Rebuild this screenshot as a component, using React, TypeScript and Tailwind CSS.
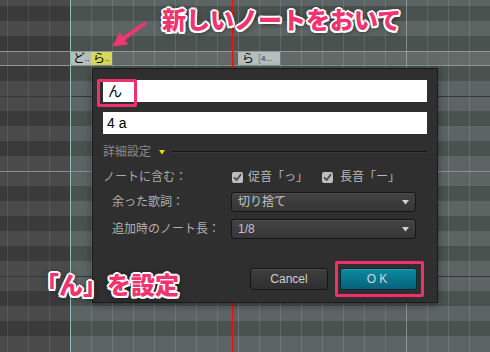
import React from "react";

type Row = { k: "L" | "D" | "S" | "LD" | "LB"; h?: "6" | "16" };

const rows: Row[] = [
  { k: "L", h: "6" },
  { k: "D" },
  { k: "L" },
  { k: "D" },
  { k: "S" },
  { k: "D" },
  { k: "L" },
  { k: "LD" },
  { k: "D" },
  { k: "L" },
  { k: "D" },
  { k: "L" },
  { k: "LB" },
  { k: "D" },
  { k: "L" },
  { k: "D" },
  { k: "L" },
  { k: "D" },
  { k: "L" },
  { k: "LD" },
  { k: "D" },
  { k: "L" },
  { k: "D" },
  { k: "L", h: "16" },
];

function GridRow({ r }: { r: Row }) {
  const h = r.h === "6" ? "h-[6px]" : r.h === "16" ? "h-[16px]" : "h-[15px]";
  let rowCls = "";
  let left = "bg-[#4a4a4a]";
  let right = "bg-[#5c6563]";
  if (r.k === "D") {
    left = "bg-[#3a3a3a]";
    right = "bg-[#49524f]";
  } else if (r.k === "S") {
    rowCls = "border-y border-[#8e9593]";
    left = "bg-[#4f4f4f]";
    right = "bg-[#636b69]";
  } else if (r.k === "LD") {
    rowCls = "border-t border-[#343837]";
  } else if (r.k === "LB") {
    rowCls = "border-t border-[#8a8f8d]";
  }
  return (
    <div className={`flex ${h} ${rowCls}`}>
      <div className={`w-[71px] ${left}`} />
      <div className={`flex-1 ${right}`} />
    </div>
  );
}

const vlines = [91, 112, 133, 154, 175, 196, 217, 259, 280, 301, 322, 343, 364, 385, 427, 448, 469];

function Check() {
  return (
    <div className="w-[11px] h-[11px] rounded-[2px] bg-[#bdbdbd] flex items-center justify-center">
      <svg width="9" height="9" viewBox="0 0 9 9">
        <path d="M1.5 4.8 L3.6 7 L7.6 1.8" fill="none" stroke="#4a4a4a" strokeWidth="1.8" strokeLinecap="round" strokeLinejoin="round" />
      </svg>
    </div>
  );
}

function Select({ text }: { text: string }) {
  return (
    <div className="w-[185px] h-[20px] rounded-[3px] border border-[#161616] bg-gradient-to-b from-[#434343] to-[#363636] flex items-center pl-[6px] pr-[6px] shadow-[inset_0_1px_0_rgba(255,255,255,0.06)]">
      <span className="flex-1 text-[12px] text-[#c4c4c4] leading-none">{text}</span>
      <svg width="7" height="5" viewBox="0 0 7 5">
        <polygon points="0,0 7,0 3.5,4.5" fill="#d2d2d2" />
      </svg>
    </div>
  );
}

const outline =
  "[text-shadow:2px_0_0_#fff,-2px_0_0_#fff,0_2px_0_#fff,0_-2px_0_#fff,1.5px_1.5px_0_#fff,-1.5px_-1.5px_0_#fff,1.5px_-1.5px_0_#fff,-1.5px_1.5px_0_#fff,0_0_6px_rgba(0,0,0,0.55),1px_2px_5px_rgba(0,0,0,0.5)]";

export default function App() {
  return (
    <div className="relative w-[490px] h-[352px] overflow-hidden font-['Liberation_Sans','Noto_Sans_CJK_JP',sans-serif]">
      {/* piano roll rows */}
      <div className="flex flex-col">
        {rows.map((r, i) => (
          <GridRow key={i} r={r} />
        ))}
      </div>

      {/* vertical grid lines */}
      <svg className="absolute inset-0" width="490" height="352">
        {[7, 28, 49].map((x) => (
          <rect key={x} x={x} y={0} width={1} height={352} fill="rgba(255,255,255,0.09)" />
        ))}
        {vlines.map((x) => (
          <rect key={x} x={x} y={0} width={1} height={352} fill="rgba(255,255,255,0.12)" />
        ))}
        <rect x={238} y={0} width={1} height={352} fill="rgba(255,255,255,0.17)" />
        <rect x={406} y={0} width={1} height={352} fill="rgba(255,255,255,0.32)" />
        <rect x={70} y={0} width={1} height={352} fill="#8fbcb3" />
        <rect x={232} y={0} width={1.4} height={352} fill="#f01010" />
      </svg>

      {/* notes */}
      <div className="absolute left-[71px] top-[52px] w-[20px] h-[13px] bg-[#b3bebd] flex items-center pl-[2px] text-[12px] leading-none text-black overflow-hidden whitespace-nowrap">
        ど<span className="text-[8px] self-end mb-[2px]">..</span>
      </div>
      <div className="absolute left-[91px] top-[52px] w-[21px] h-[13px] bg-[#d6d95a] flex items-center pl-[2px] text-[12px] leading-none text-black overflow-hidden whitespace-nowrap">
        ら<span className="text-[8px] self-end mb-[2px]">..</span>
      </div>
      <div className="absolute left-[238px] top-[52px] w-[42px] h-[13px] bg-[#b3bebd] flex items-center pl-[4px] text-[12px] leading-none text-black overflow-hidden whitespace-nowrap">
        ら<span className="ml-[4px] text-[11px] text-[#7c8584]">[</span>
        <span className="text-[8px] text-[#333] self-end mb-[2px]">4...</span>
      </div>

      {/* dialog */}
      <div className="absolute left-[92px] top-[68px] w-[346px] h-[235px] bg-[#2f2f2f] border border-[#1b1b1b] shadow-[0_2px_8px_rgba(0,0,0,0.4)] flex flex-col pt-[11px] px-[10px]">
        <div className="h-[22px] bg-white flex items-center pl-[5px] text-[14px] leading-none text-black">ん</div>
        <div className="mt-[10px] h-[22px] bg-white flex items-center pl-[4px] text-[14px] leading-none text-black">4 a</div>

        <div className="mt-[11px] h-[14px] flex items-center">
          <span className="text-[12px] leading-none text-[#8a8a8a]">詳細設定</span>
          <svg className="ml-[8px]" width="6" height="5" viewBox="0 0 6 5">
            <polygon points="0,0 6,0 3,4.5" fill="#e2e000" />
          </svg>
          <div className="ml-[7px] flex-1 h-[2px] border-t border-[#151515] border-b border-b-[#3a3a3a]" />
        </div>

        <div className="mt-[10px] h-[16px] flex items-center">
          <span className="w-[129px] text-[12px] leading-none text-[#a9a9a9]">ノートに含む：</span>
          <div className="w-[90px] flex items-center">
            <Check />
            <span className="ml-[5px] text-[12px] leading-none text-[#b9b9b9]">促音「っ」</span>
          </div>
          <Check />
          <span className="ml-[7px] text-[12px] leading-none text-[#b9b9b9]">長音「ー」</span>
        </div>

        <div className="mt-[7px] flex items-center">
          <span className="w-[128px] pl-[9px] text-[12px] leading-none text-[#b0b0b0]">余った歌詞：</span>
          <Select text="切り捨て" />
        </div>
        <div className="mt-[7px] flex items-center">
          <span className="w-[128px] pl-[9px] text-[12px] leading-none text-[#b0b0b0]">追加時のノート長：</span>
          <Select text="1/8" />
        </div>

        <div className="mt-[29px] flex justify-end gap-[12px] pr-[10px]">
          <div className="w-[78px] h-[22px] rounded-[3px] border border-[#151515] bg-gradient-to-b from-[#3e3e3e] to-[#2f2f2f] shadow-[inset_0_1px_0_rgba(255,255,255,0.07)] flex items-center justify-center text-[12px] leading-none text-[#cfcfcf]">
            Cancel
          </div>
          <div className="w-[77px] h-[22px] rounded-[3px] border border-[#0f2a30] bg-gradient-to-b from-[#0c8aa0] to-[#05637a] shadow-[inset_0_1px_0_rgba(255,255,255,0.15)] flex items-center justify-center text-[12px] leading-none tracking-[3px] text-[#cfdadd]">
            OK
          </div>
        </div>
      </div>

      {/* highlight boxes */}
      <div className="absolute left-[97px] top-[79px] w-[40px] h-[28px] border-[3px] border-[#f0306c] rounded-[2px]" />
      <div className="absolute left-[335px] top-[261px] w-[89px] h-[36px] border-[3px] border-[#f0306c] rounded-[2px]" />

      {/* arrow */}
      <svg className="absolute inset-0 pointer-events-none" width="490" height="352">
        <polygon
          points="113,46 127.7,44.2 124.8,40.1 146.8,23.6 145.2,21.8 122.6,36.9 119.7,32.8"
          fill="#f0386e"
          stroke="#f0386e"
          strokeWidth="0.8"
          strokeLinejoin="round"
        />
      </svg>

      {/* annotations */}
      <div className={`absolute left-[162px] top-[7px] text-[24px] leading-none font-black text-[#f2336f] whitespace-nowrap font-['Noto_Sans_CJK_JP',sans-serif] ${outline}`}>
        新しいノートをおいて
      </div>
      <div className={`absolute left-[35px] top-[272px] text-[24px] leading-none font-black text-[#f2336f] whitespace-nowrap font-['Noto_Sans_CJK_JP',sans-serif] ${outline}`}>
        「ん」を設定
      </div>
    </div>
  );
}
